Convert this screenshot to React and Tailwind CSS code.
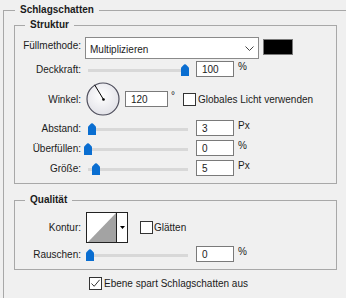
import React from 'react';

function Thumb() {
  return (
    <svg width="8" height="12" viewBox="0 0 8 12" className="block">
      <path d="M0 4.6 Q0 3.6 0.9 2.8 L3.1 0.6 Q4 -0.1 4.9 0.6 L7.1 2.8 Q8 3.6 8 4.6 V12 H0 Z" fill="#0a6ed1" />
    </svg>
  );
}

function Slider({ pos }) {
  return (
    <div className="relative ml-[3px] h-[16px] w-[104px] shrink-0">
      <div className="absolute left-[4px] right-0 top-[8px] h-[3px] bg-[#d8d8d8]" />
      <div className="absolute bottom-[1px]" style={{ left: pos }}>
        <Thumb />
      </div>
    </div>
  );
}

function Label({ children, className = '' }) {
  return <div className={'w-[66px] shrink-0 text-right ' + className}>{children}</div>;
}

function NumBox({ value, className = 'w-[38px]' }) {
  return (
    <div className={'flex h-[16px] shrink-0 items-center border border-[#7a7a7a] bg-white pl-[5px] ' + className}>
      {value}
    </div>
  );
}

function CheckBox({ checked }) {
  return (
    <div className="flex h-[13px] w-[13px] shrink-0 items-center justify-center border border-[#333333] bg-white">
      {checked && (
        <svg width="11" height="11" viewBox="0 0 11 11">
          <polyline points="1.5,5.5 4.2,8.3 9.6,1.8" fill="none" stroke="#333333" strokeWidth="1" />
        </svg>
      )}
    </div>
  );
}

function SliderRow({ label, pos, value, unit }) {
  return (
    <div className="mt-[4px] flex h-[16px] items-center">
      <Label>{label}</Label>
      <Slider pos={pos} />
      <NumBox value={value} className="ml-[8px] w-[38px]" />
      <span className="ml-[4px] self-start leading-[12px]">{unit}</span>
    </div>
  );
}

function Dial() {
  return (
    <svg width="34" height="34" viewBox="0 0 34 34" className="ml-[5px] block shrink-0">
      <defs>
        <radialGradient id="dialFill" cx="45%" cy="40%" r="60%">
          <stop offset="0%" stopColor="#ffffff" />
          <stop offset="100%" stopColor="#e2e2e8" />
        </radialGradient>
      </defs>
      <circle cx="17" cy="17" r="16" fill="url(#dialFill)" stroke="#4e4e5c" strokeWidth="1.2" />
      <line x1="17.5" y1="17.5" x2="8.6" y2="2.8" stroke="#000000" strokeWidth="1" />
      <circle cx="17.5" cy="17.5" r="1.3" fill="#000000" />
    </svg>
  );
}

function ContourPicker() {
  return (
    <div className="ml-[5px] flex h-[31px] w-[42px] shrink-0 border border-[#222222] bg-white">
      <svg width="29" height="29" viewBox="0 0 29 29" className="block">
        <polygon points="1,29 29,0 29,29" fill="#a3a3a3" />
      </svg>
      <div className="flex flex-1 items-center justify-center border-l border-[#222222]">
        <svg width="5" height="3" viewBox="0 0 5 3">
          <polygon points="0,0 5,0 2.5,3" fill="#000000" />
        </svg>
      </div>
    </div>
  );
}

export default function App() {
  return (
    <div className="h-[298px] w-[346px] overflow-hidden bg-[#f0f0f0] font-['Liberation_Sans',Arial,sans-serif] text-[10px] text-[#1b1b1b]">
      <fieldset className="ml-[3px] mt-[4px] h-[330px] w-[380px] border border-[#a8a8a8]">
        <legend className="ml-[11px] px-[5px] font-bold leading-[12px]">Schlagschatten</legend>

        <fieldset className="ml-[10px] mt-[3px] w-[323px] border border-[#a8a8a8] pb-[7px]">
          <legend className="ml-[10px] px-[5px] font-bold leading-[12px]">Struktur</legend>

          <div className="mt-[6px] flex h-[22px] items-start">
            <Label className="mt-[1px] leading-[16px]">Füllmethode:</Label>
            <div className="ml-[4px] flex h-[22px] w-[174px] shrink-0 items-center justify-between border border-[#8a8a8a] bg-white pl-[4px] pr-[4px] pt-[3px]">
              <span>Multiplizieren</span>
              <svg width="9" height="5" viewBox="0 0 9 5" className="mb-[2px]">
                <polyline points="0.5,0.5 4.5,4.5 8.5,0.5" fill="none" stroke="#444444" strokeWidth="1" />
              </svg>
            </div>
            <div className="ml-[4px] mt-[2px] h-[16px] w-[30px] shrink-0 border border-[#7a7a7a] bg-black" />
          </div>

          <div className="mt-[2px] flex h-[16px] items-center">
            <Label>Deckkraft:</Label>
            <Slider pos={97} />
            <NumBox value="100" className="ml-[8px] w-[38px]" />
            <span className="ml-[4px] self-start leading-[12px]">%</span>
          </div>

          <div className="mt-[5px] flex h-[34px] items-center">
            <Label>Winkel:</Label>
            <Dial />
            <NumBox value="120" className="ml-[5px] w-[43px]" />
            <span className="ml-[3px] self-start pt-[8px] leading-[12px]">°</span>
            <div className="ml-[8px]">
              <CheckBox />
            </div>
            <span className="ml-[2px]">Globales Licht verwenden</span>
          </div>

          <SliderRow label="Abstand:" pos={4} value="3" unit="Px" />
          <SliderRow label="Überfüllen:" pos={0} value="0" unit="%" />
          <SliderRow label="Größe:" pos={8} value="5" unit="Px" />
        </fieldset>

        <fieldset className="ml-[10px] mt-[10px] w-[323px] border border-[#a8a8a8] pb-[7px]">
          <legend className="ml-[10px] px-[5px] font-bold leading-[12px]">Qualität</legend>

          <div className="mt-[6px] flex h-[31px] items-center">
            <Label>Kontur:</Label>
            <ContourPicker />
            <div className="ml-[12px]">
              <CheckBox />
            </div>
            <span className="ml-[1px]">Glätten</span>
          </div>

          <div className="mt-[3px] flex h-[16px] items-center">
            <Label>Rauschen:</Label>
            <Slider pos={2} />
            <NumBox value="0" className="ml-[8px] w-[38px]" />
            <span className="ml-[4px] self-start leading-[12px]">%</span>
          </div>
        </fieldset>

        <div className="ml-[85px] mt-[6px] flex h-[14px] items-center">
          <CheckBox checked />
          <span className="ml-[2px]">Ebene spart Schlagschatten aus</span>
        </div>
      </fieldset>
    </div>
  );
}
